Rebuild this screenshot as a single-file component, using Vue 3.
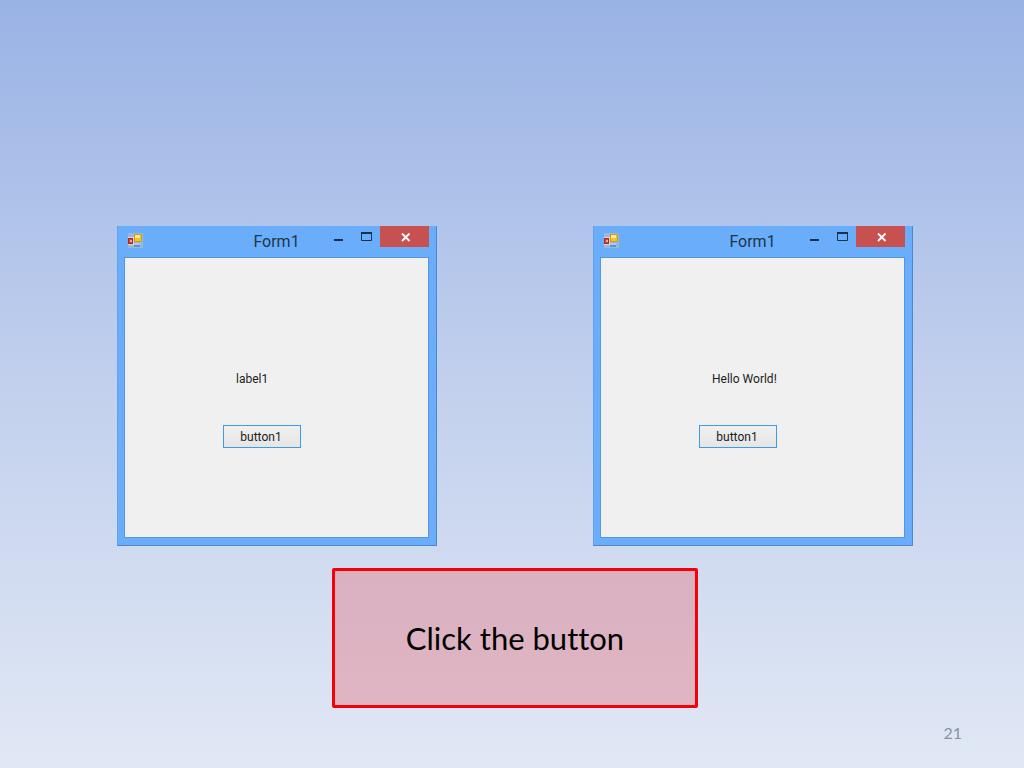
<script setup>
import { ref } from 'vue'

const forms = ref([
  { id: 'before', label: 'label1' },
  { id: 'after', label: 'Hello World!' },
])

function greet(form) {
  form.label = 'Hello World!'
}
</script>

<template>
  <main class="slide">
    <div class="windows">
      <section v-for="form in forms" :key="form.id" class="window" aria-label="Form1">
        <header class="titlebar">
          <svg class="app-icon" width="16" height="16" viewBox="0 0 16 16" aria-hidden="true">
            <rect x="0" y="0" width="15" height="15" rx="1" fill="#a9bfcb" opacity="0.75" />
            <rect x="0" y="4" width="6" height="8" fill="#e9d0d2" />
            <rect x="0.500" y="5.500" width="4" height="5" fill="#d5443c" stroke="#a12a2a" />
            <rect x="2" y="7" width="2" height="2" fill="#f3a79b" />
            <rect x="6.500" y="1.500" width="7" height="7" fill="#f0c52d" stroke="#c49a2e" />
            <rect x="7" y="2" width="5" height="3" fill="#ffe98a" />
            <rect x="6" y="11" width="6" height="3" fill="#5e90d4" />
            <rect x="6" y="10" width="6" height="2" fill="#a9c8ec" />
          </svg>
          <h2 class="title">Form1</h2>
          <div class="controls">
            <button type="button" class="control" aria-label="Minimize">
              <svg width="12" height="12" viewBox="0 0 12 12"><path d="M2 9H11" stroke="#17304b" stroke-width="2" /></svg>
            </button>
            <button type="button" class="control" aria-label="Maximize">
              <svg width="12" height="12" viewBox="0 0 12 12"><path d="M1.500 2V9.500H11.500V2" fill="none" stroke="#17304b" /><path d="M1 2H12" stroke="#17304b" stroke-width="2" /></svg>
            </button>
            <button type="button" class="control close" aria-label="Close">
              <svg width="12" height="12" viewBox="0 0 12 12"><path d="M3 2.500L10.500 10M10.500 2.500L3 10" stroke="#fff" stroke-width="1.800" /></svg>
            </button>
          </div>
        </header>
        <div class="client">
          <span class="label">{{ form.label }}</span>
          <button type="button" class="push" @click="greet(form)">button1</button>
        </div>
      </section>
    </div>
    <p class="callout">Click the button</p>
    <footer class="page-number">21</footer>
  </main>
</template>

<style>
body {
  margin: 0;
}
</style>

<style scoped>
.slide {
  box-sizing: border-box;
  min-height: 100vh;
  padding: 226px 62px 24px 68px;
  display: flex;
  flex-direction: column;
  align-items: center;
  background: linear-gradient(#99b3e5 0%, #c2d0ed 50%, #e1e8f5 100%);
  font-family: Lato, "Liberation Sans", sans-serif;
}

.windows {
  width: 100%;
  display: flex;
  justify-content: center;
  gap: 156px;
}

.window {
  box-sizing: border-box;
  flex: 0 1 320px;
  min-width: 0;
  padding: 0 7px 7px 6px;
  border: solid #4d88cb;
  border-width: 0 1px 1px 0;
  border-left: 1px solid #62a2ee;
  background: #6aadfa;
}

.titlebar {
  height: 31px;
  display: grid;
  grid-template-columns: 1fr auto 1fr;
  align-items: start;
}

.app-icon {
  margin: 7px 0 0 4px;
}

.title {
  margin: 0;
  font-family: Roboto, "Liberation Sans", sans-serif;
  font-size: 16px;
  line-height: 32px;
  font-weight: 400;
  color: #20354b;
}

.controls {
  display: flex;
  justify-content: flex-end;
}

.control {
  width: 28px;
  height: 21px;
  padding: 0;
  border: 0;
  display: grid;
  place-items: center;
  background: transparent;
}

.close {
  width: 49px;
  background: #c75050;
}

.client {
  box-sizing: border-box;
  min-height: 281px;
  padding: 111px 0 0 98px;
  border: 1px solid #5796dc;
  display: flex;
  flex-direction: column;
  align-items: flex-start;
  gap: 36px;
  background: #f0f0f0;
  color: #1c1c20;
}

.label {
  margin-left: 13px;
  font-family: Roboto, "Liberation Sans", sans-serif;
  font-size: 12px;
  line-height: 20px;
}

.push {
  box-sizing: border-box;
  width: 78px;
  height: 23px;
  padding: 0 2px 0 0;
  border: 1px solid #3c9bea;
  background: linear-gradient(#f0f0f0, #e5e5e5);
  color: inherit;
  font-family: Roboto, "Liberation Sans", sans-serif;
  font-size: 12px;
  line-height: 20px;
}

.callout {
  box-sizing: border-box;
  width: 366px;
  max-width: 100%;
  min-height: 140px;
  margin: 22px 0 0;
  padding: 12px;
  border: 3px solid #f60008;
  border-radius: 2px;
  display: grid;
  place-items: center;
  background: linear-gradient(#d9b1c1, #e0b5c3);
  color: #000;
  font-size: 31px;
  font-variant-ligatures: none;
  line-height: 40px;
}

.page-number {
  margin-top: auto;
  align-self: flex-end;
  color: #8a92a2;
  font-size: 16px;
  line-height: 22px;
}
</style>
